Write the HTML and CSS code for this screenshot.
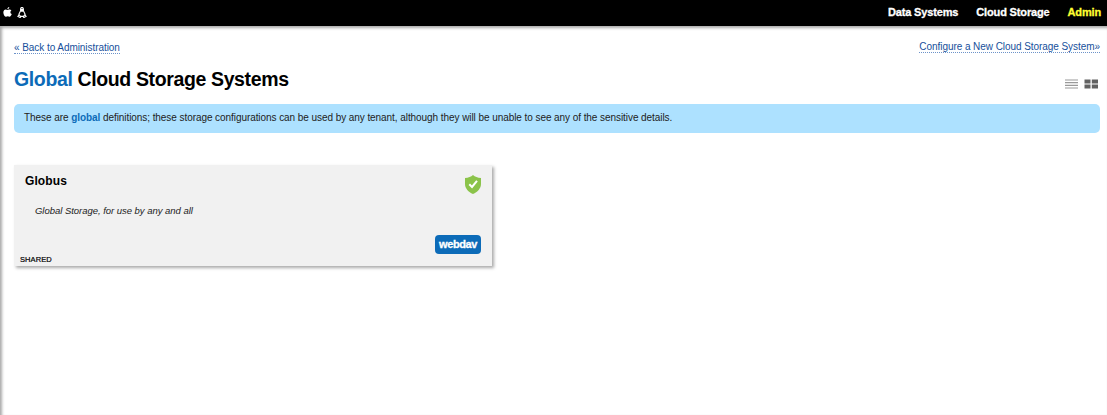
FILE: index.html
```html
<!DOCTYPE html>
<html lang="en">
<head>
<meta charset="utf-8">
<title>Global Cloud Storage Systems</title>
<link rel="stylesheet" href="styles.css">
</head>
<body>
<header class="topbar">
  <div class="platforms">
    <svg class="apple" viewBox="0 0 18 20"><path fill="#fff" d="M12.500 0C12.600 2.500 10.800 4.500 8.700 4.500C8.500 2.300 10.500.4 12.500 0ZM9 6C10 6 11 4.800 13 4.800C14.700 4.800 16 5.700 16.800 6.800C13.800 8.700 14.200 12.700 17.500 14C16.600 16.600 15 19.400 13 19.400C11.700 19.400 11 18.600 9.500 18.600C8 18.600 7.200 19.500 6 19.500C3.500 19.500.7 15 .7 10.800C.7 7 3 4.900 5.400 4.900C7 4.900 8.100 6 9 6Z"/></svg>
    <svg class="linux" viewBox="0 0 20 24"><path fill="none" stroke="#fff" stroke-width="2.400" d="M7 8V5C7 2.200 8.200 1 10 1S13 2.200 13 5V8C14 11 17 14 17 18L19 20.500L14 23L12 20.500H8L6 23L1 20.500L3 18C3 14 6 11 7 8ZM4 17L7 21M16 17L13 21"/><path fill="#fff" d="M7 4H13V9L10 11L7 9Z"/></svg>
  </div>
  <nav class="menu">
    <a class="menu-data">Data Systems</a>
    <a class="menu-cloud">Cloud Storage</a>
    <a class="menu-admin">Admin</a>
  </nav>
</header>
<main class="page">
  <div class="links"><a class="back">« Back to Administration</a><a class="configure">Configure a New Cloud Storage System»</a></div>
  <div class="heading">
    <h1><span class="accent">Global</span> Cloud Storage Systems</h1>
    <div class="views">
      <svg width="13" height="10" viewBox="0 0 13 10"><path d="M0 1H13M0 3.700H13M0 6.300H13M0 9H13" stroke="#999" stroke-width="1.200"/></svg>
      <svg width="14" height="10" viewBox="0 0 14 10" fill="#626262"><path d="M.5 .5H6.500V4.500H.5ZM7.800 .5H14V4.500H7.800ZM.5 5.500H6.500V9.500H.5ZM7.800 5.500H14V9.500H7.800Z"/></svg>
    </div>
  </div>
  <p class="notice"><span>These are <b class="accent">global</b> definitions; these storage configurations can be used by any tenant, although they will be unable to see any of the sensitive details.</span></p>
  <section class="card">
    <div class="card-head">
      <h2>Globus</h2>
      <svg width="16" height="19" viewBox="0 0 16 19"><path fill="#8bc34a" d="M8 0C10 1.800 12.500 2.700 16 3V9C16 13.500 12.500 17 8 19C3.500 17 0 13.500 0 9V3C3.500 2.700 6 1.800 8 0Z"/><path fill="none" stroke="#fff" stroke-width="2" d="M4.300 9.300L7 12L12 5.800"/></svg>
    </div>
    <p class="description">Global Storage, for use by any and all</p>
    <div class="card-foot"><span class="shared">SHARED</span><span class="protocol">webdav</span></div>
  </section>
</main>
</body>
</html>
```
FILE: styles.css
```css
* { box-sizing: border-box; }
body { margin: 0; height: 415px; overflow: hidden; background: #fff; color: #000; font-family: "Liberation Sans", Arial, sans-serif; display: flex; flex-direction: column; }
h1, h2, p { margin: 0; }
a { white-space: nowrap; }
.topbar { height: 26px; flex: none; background: #000; display: flex; justify-content: space-between; align-items: flex-start; padding: 0 6px 0 3px; }
.platforms { display: flex; gap: 5px; padding-top: 7px; }
.apple { width: 9px; height: 10px; }
.linux { width: 10px; height: 11px; }
.menu { display: flex; gap: 18px; padding-top: 5px; font-size: 11px; line-height: 14px; font-weight: bold; color: #fff; letter-spacing: -.15px; -webkit-text-stroke: .3px; }
.menu-admin { color: #ffff32; }
.page { flex: 1; padding: 15px 7px 0 14px; box-shadow: inset 2px 2px 3px #aaa; }
.links { display: flex; justify-content: space-between; font-size: 10px; line-height: 12px; color: #164f9b; letter-spacing: -.06px; }
.links a { border-bottom: 1px dotted #6d93c9; height: 12px; }
.back { margin-top: 1px; }
.heading { display: flex; justify-content: space-between; margin-top: 13px; height: 24px; }
h1 { font-size: 19.500px; line-height: 24px; letter-spacing: -.37px; white-space: nowrap; }
.accent { color: #0c6bb8; }
.views { display: flex; gap: 6px; padding: 12px 2px 0 0; }
.notice { height: 29px; margin-top: 13px; padding: 7px 10px; background: #ade1ff; border-radius: 5px; color: #222; font-size: 10px; line-height: 13px; letter-spacing: -.066px; white-space: nowrap; }
.card { width: 478px; height: 101px; margin-top: 32px; background: #f1f1f1; box-shadow: 2px 2px 3px #aaa; display: flex; flex-direction: column; }
.card-head { display: flex; justify-content: space-between; padding: 10px 11px 0; height: 39px; }
h2 { font-size: 12px; line-height: 13px; letter-spacing: .1px; }
.description { padding-left: 21px; font-size: 9.500px; line-height: 14px; letter-spacing: -.03px; font-style: italic; color: #222; }
.card-foot { flex: 1; display: flex; justify-content: space-between; align-items: flex-end; padding: 0 11px 0 6px; }
.shared { font-size: 7.500px; line-height: 8px; margin-bottom: 2px; letter-spacing: .1px; -webkit-text-stroke: .2px; }
.protocol { width: 46px; height: 19px; margin-bottom: 12px; border-radius: 4px; background: #0c6bb8; color: #fff; font-size: 11px; line-height: 19px; font-weight: bold; text-align: center; letter-spacing: -.4px; -webkit-text-stroke: .3px; }
```
